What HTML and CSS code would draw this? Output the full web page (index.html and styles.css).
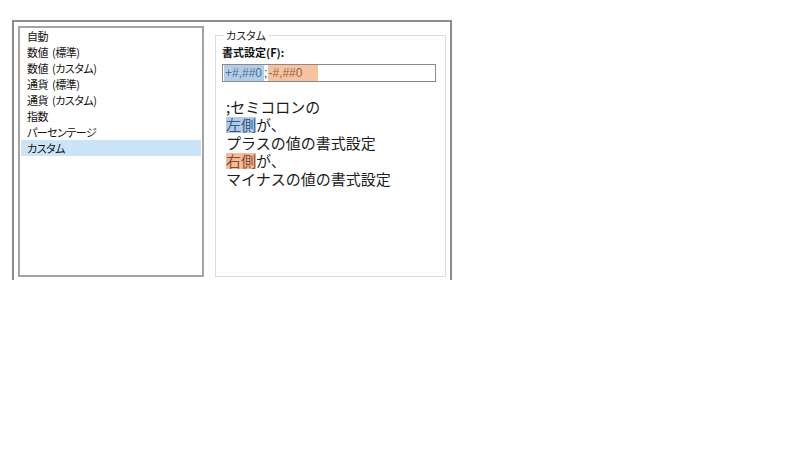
FILE: index.html
```html
<!DOCTYPE html>
<html lang="ja">
<head>
    <meta charset="UTF-8">
    <title>表示形式 カスタム</title>
    <link rel="stylesheet" href="styles.css">
</head>
<body>
    <div class="frame">
        <ul class="category-list">
            <li>自動</li>
            <li>数値 (標準)</li>
            <li>数値 (カスタム)</li>
            <li>通貨 (標準)</li>
            <li>通貨 (カスタム)</li>
            <li>指数</li>
            <li>パーセンテージ</li>
            <li class="selected">カスタム</li>
        </ul>

        <fieldset class="custom-group">
            <legend>カスタム</legend>
            <label class="format-label" for="format">書式設定(F):</label>
            <div class="format-input" id="format">
                <span class="part-plus">+#,##0</span><span class="semicolon">;</span><span class="part-minus">-#,##0</span>
            </div>

            <div class="note">
                <p>;セミコロンの</p>
                <p><span class="mark mark-plus">左側</span>が、</p>
                <p>プラスの値の書式設定</p>
                <p><span class="mark mark-minus">右側</span>が、</p>
                <p>マイナスの値の書式設定</p>
            </div>
        </fieldset>
    </div>
</body>
</html>
```

FILE: styles.css
```css
body {
    margin: 0;
    background: #fff;
    font-family: "Noto Sans CJK JP", "Noto Sans", sans-serif;
    color: #1a1a1a;
}
.frame {
    display: flex;
    gap: 11px;
    width: 428px;
    height: 251px;
    margin: 20px 0 0 12px;
    padding: 4px 4px 3px 4px;
    border: 2px solid #8c8c8c;
    border-bottom: none;
}
.category-list {
    list-style: none;
    margin: 0;
    padding: 0 1px;
    width: 180px;
    border: 2px solid #a4a4a4;
    font-size: 11px;
    letter-spacing: -0.5px;
    word-spacing: 2px;
    font-feature-settings: "palt";
}
.category-list li {
    height: 16px;
    line-height: 16px;
    padding-left: 6px;
    color: #111;
}
.category-list li.selected {
    background: #cce4f7;
}
.custom-group {
    flex: 1;
    margin: 0;
    margin-top: 2px;
    padding: 0 9px 0 6px;
    border: 1px solid #dcdcdc;
    font-size: 11px;
    font-feature-settings: "palt";
}
.custom-group legend {
    margin-left: 2px;
    padding: 0 2px;
    line-height: 14px;
    color: #222;
}
.format-label {
    display: block;
    margin-top: 2px;
    line-height: 16px;
    font-weight: bold;
    color: #111;
}
.format-input {
    display: flex;
    align-items: center;
    height: 16px;
    margin-top: 4px;
    padding: 0 1px;
    border: 1.5px solid #8a8a8a;
    font-family: "Liberation Sans", Arial, sans-serif;
    font-size: 12px;
}
.part-plus {
    background: #b3cde8;
    color: #4c6f94;
    padding: 0 2px 0 1px;
    line-height: 16px;
}
.semicolon {
    color: #333;
    padding-right: 1px;
}
.part-minus {
    background: #f4c4a2;
    color: #9a6240;
    padding: 0 16px 0 0;
    line-height: 16px;
}
.note {
    margin-top: 16px;
    padding-left: 4px;
    font-size: 15px;
    font-feature-settings: normal;
    color: #1c1c1c;
}
.note p {
    margin: 0;
    height: 18px;
    line-height: 18px;
}
.mark {
    display: inline-block;
    line-height: 16px;
}
.mark-plus {
    background: #b0cbe8;
    color: #3a5a80;
}
.mark-minus {
    background: #f2bc9c;
    color: #8a4a28;
}
```
